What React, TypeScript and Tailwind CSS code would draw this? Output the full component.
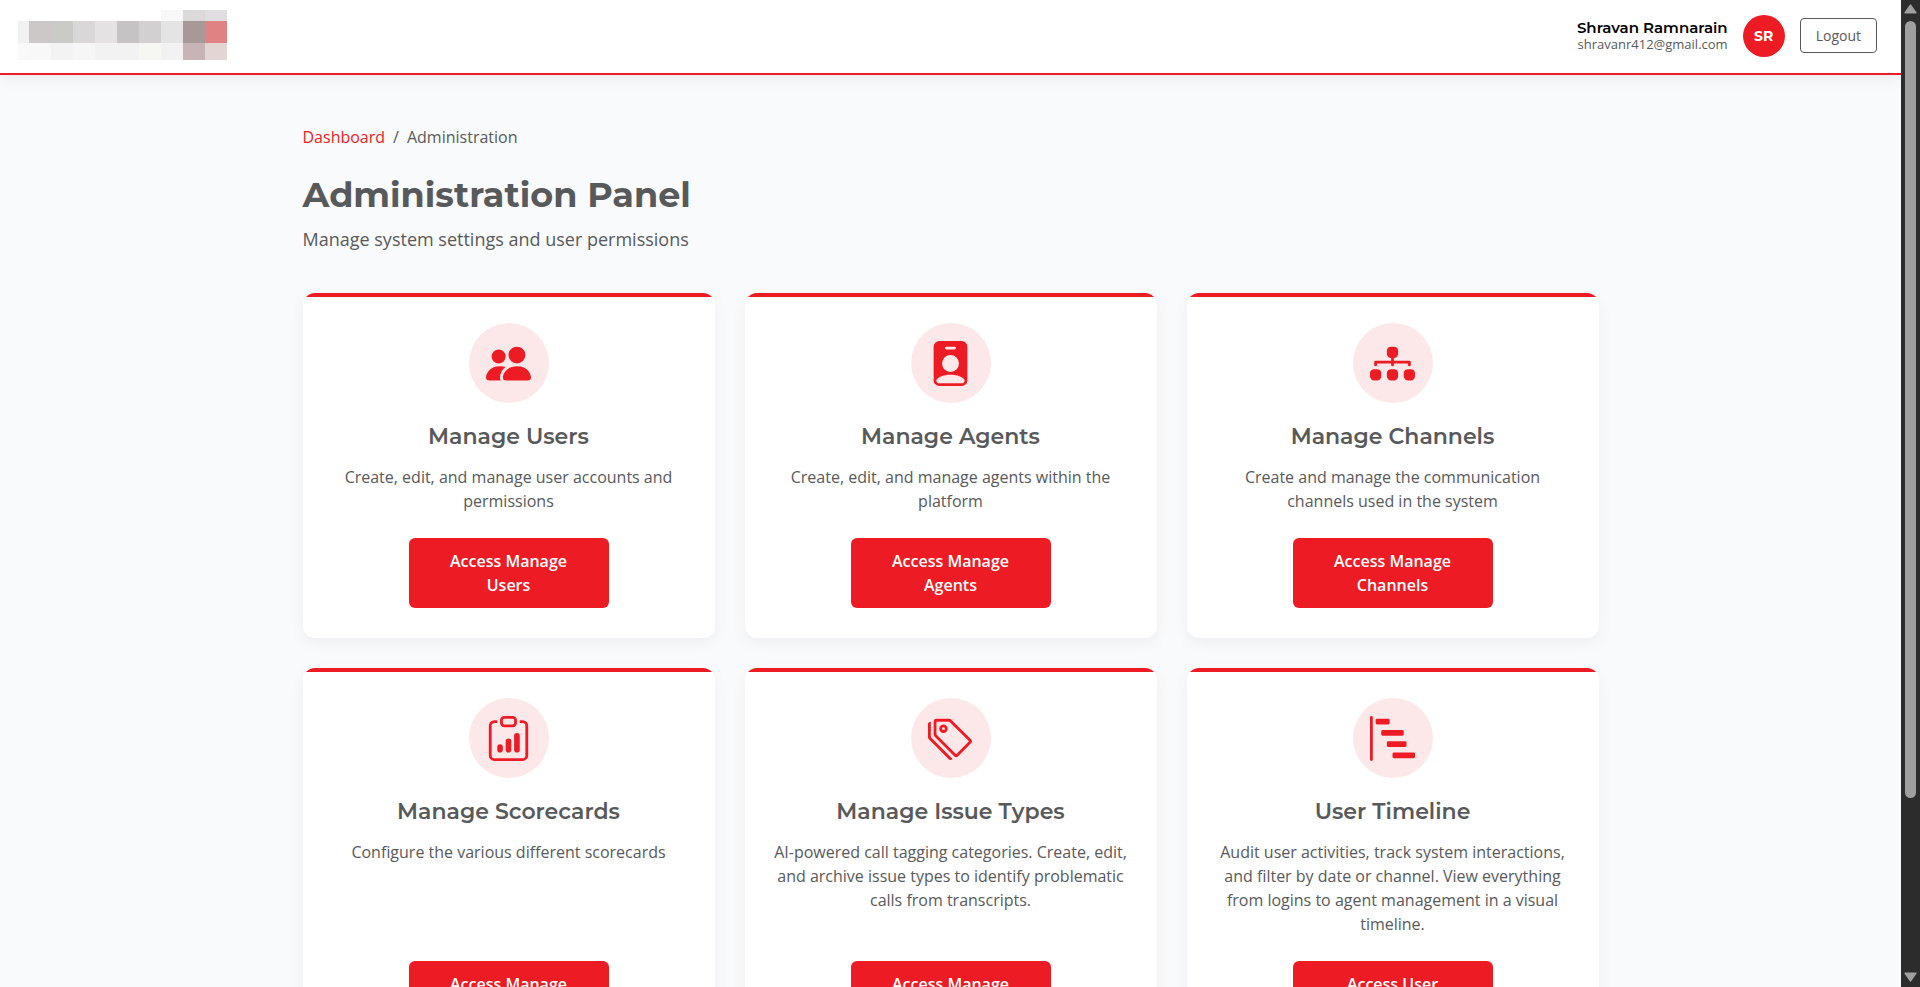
import type { IconType } from 'react-icons';
import {
  BsBarChartSteps,
  BsClipboardData,
  BsDiagram3Fill,
  BsPeopleFill,
  BsPersonBadgeFill,
  BsTags,
} from 'react-icons/bs';

interface AdminSection {
  title: string;
  description: string;
  href: string;
  icon: IconType;
}

const sections: AdminSection[] = [
  {
    title: 'Manage Users',
    description: 'Create, edit, and manage user accounts and permissions',
    href: '#users',
    icon: BsPeopleFill,
  },
  {
    title: 'Manage Agents',
    description: 'Create, edit, and manage agents within the platform',
    href: '#agents',
    icon: BsPersonBadgeFill,
  },
  {
    title: 'Manage Channels',
    description: 'Create and manage the communication channels used in the system',
    href: '#channels',
    icon: BsDiagram3Fill,
  },
  {
    title: 'Manage Scorecards',
    description: 'Configure the various different scorecards',
    href: '#scorecards',
    icon: BsClipboardData,
  },
  {
    title: 'Manage Issue Types',
    description:
      'AI-powered call tagging categories. Create, edit, and archive issue types to identify problematic calls from transcripts.',
    href: '#issue-types',
    icon: BsTags,
  },
  {
    title: 'User Timeline',
    description:
      'Audit user activities, track system interactions, and filter by date or channel. View everything from logins to agent management in a visual timeline.',
    href: '#timeline',
    icon: BsBarChartSteps,
  },
];

// [x, y, width, height, fill]
const logoTiles: [number, number, number, number, string][] = [
  [143, 0, 22, 11, '#f8f8f8'],
  [165, 0, 22, 11, '#dbd9da'],
  [187, 0, 22, 11, '#e0dee0'],
  [0, 11, 11, 22, '#f1f1f1'],
  [11, 11, 22, 22, '#cdc8c8'],
  [33, 11, 22, 22, '#cacac7'],
  [55, 11, 22, 22, '#d9d7d8'],
  [77, 11, 22, 22, '#e4e2e3'],
  [99, 11, 22, 22, '#c5c4c2'],
  [121, 11, 22, 22, '#d2d0d1'],
  [143, 11, 22, 22, '#e4e4e4'],
  [165, 11, 22, 22, '#a69997'],
  [187, 11, 22, 22, '#e08183'],
  [0, 33, 11, 17, '#f9f9f9'],
  [11, 33, 22, 17, '#f8f8f8'],
  [33, 33, 22, 17, '#f3f3f3'],
  [55, 33, 22, 17, '#f6f6f6'],
  [77, 33, 44, 17, '#f2f2f2'],
  [121, 33, 22, 17, '#f6f6f3'],
  [143, 33, 22, 17, '#f2f2f2'],
  [165, 33, 22, 17, '#c8b4b6'],
  [187, 33, 22, 17, '#e3d5d4'],
];

function Logo() {
  return (
    <svg width="209" height="50" viewBox="0 0 209 50" shapeRendering="crispEdges" aria-hidden="true">
      {logoTiles.map(([x, y, width, height, fill]) => (
        <rect key={`${x}-${y}`} x={x} y={y} width={width} height={height} fill={fill} />
      ))}
    </svg>
  );
}

function Header() {
  return (
    <header className="relative flex items-center justify-between border-b-2 border-[#ed1c24] bg-white pt-2.5 pr-6 pb-[13px] pl-[18px] shadow-[0_2px_15px_rgba(0,0,0,0.08)]">
      <Logo />
      <div className="flex items-center gap-[15px] pt-px">
        <div className="text-right">
          <div className="font-['Montserrat','Inter',sans-serif] text-[15px] leading-4 font-semibold text-black">
            Shravan Ramnarain
          </div>
          <div className="text-[13px] leading-4">shravanr412@gmail.com</div>
        </div>
        <div className="flex size-[42px] items-center justify-center rounded-full bg-[#ed1c24] font-['Montserrat','Inter',sans-serif] text-sm font-bold text-white">
          SR
        </div>
        <button
          type="button"
          className="rounded border border-[#58595b] px-[15px] py-1.5 text-sm leading-[21px] hover:bg-[#58595b] hover:text-white"
        >
          Logout
        </button>
      </div>
    </header>
  );
}

function SectionCard({ section }: { section: AdminSection }) {
  const Icon = section.icon;

  return (
    <div className="relative flex flex-col items-center overflow-hidden rounded-xl bg-white px-7 py-[30px] text-center shadow-[0_5px_15px_rgba(0,0,0,0.05)] before:absolute before:inset-x-0 before:top-0 before:h-1 before:bg-[#ed1c24]">
      <div className="mb-5 flex size-20 items-center justify-center rounded-full bg-[#ed1c24]/10 text-[#ed1c24]">
        <Icon size={45} />
      </div>
      <h3 className="mb-[15px] font-['Montserrat','Inter',sans-serif] text-[22px] leading-[27px] font-semibold">
        {section.title}
      </h3>
      <p className="mb-[25px] flex-1 leading-6">{section.description}</p>
      <a
        href={section.href}
        className="w-[200px] rounded-md bg-[#ed1c24] px-[26px] py-[11px] leading-6 font-semibold text-white hover:bg-[#c8161d]"
      >
        Access {section.title}
      </a>
    </div>
  );
}

function ScrollRail() {
  return (
    <div className="flex w-[19px] shrink-0 flex-col items-center bg-[#2c2c2c] pt-1 pb-[5px]" aria-hidden="true">
      <svg width="13" height="10" viewBox="0 0 13 10" className="mb-[7px] shrink-0">
        <path d="M6.5 1.2 11.8 8.8H1.2Z" fill="#9f9f9f" stroke="#9f9f9f" strokeWidth="1.6" strokeLinejoin="round" />
      </svg>
      <div className="flex w-full flex-1 flex-col items-center">
        <div className="w-[11px] grow-[777] rounded-full bg-[#9f9f9f]" />
        <div className="grow-[174]" />
      </div>
      <svg width="13" height="10" viewBox="0 0 13 10" className="shrink-0">
        <path d="M6.5 8.8 11.8 1.2H1.2Z" fill="#9f9f9f" stroke="#9f9f9f" strokeWidth="1.6" strokeLinejoin="round" />
      </svg>
    </div>
  );
}

export default function App() {
  return (
    <div className="flex h-screen overflow-hidden bg-[#f8fafc] font-['Open_Sans','Noto_Sans',sans-serif] text-base text-[#58595b]">
      <div className="min-w-0 flex-1 overflow-hidden">
        <Header />
        <main className="mx-auto max-w-[1320px] px-3 pt-[50px] pb-10">
          <nav aria-label="Breadcrumb" className="mb-[25px] flex gap-2 leading-6">
            <a href="#dashboard" className="text-[#ed1c24] hover:underline">
              Dashboard
            </a>
            <span>/</span>
            <span>Administration</span>
          </nav>
          <h1 className="mb-[9px] font-['Montserrat','Inter',sans-serif] text-[35px] leading-[42px] font-bold">
            Administration Panel
          </h1>
          <p className="mb-10 text-lg leading-7">Manage system settings and user permissions</p>
          <div className="grid grid-cols-1 gap-[30px] md:grid-cols-2 lg:grid-cols-3">
            {sections.map((section) => (
              <SectionCard key={section.title} section={section} />
            ))}
          </div>
        </main>
      </div>
      <ScrollRail />
    </div>
  );
}
